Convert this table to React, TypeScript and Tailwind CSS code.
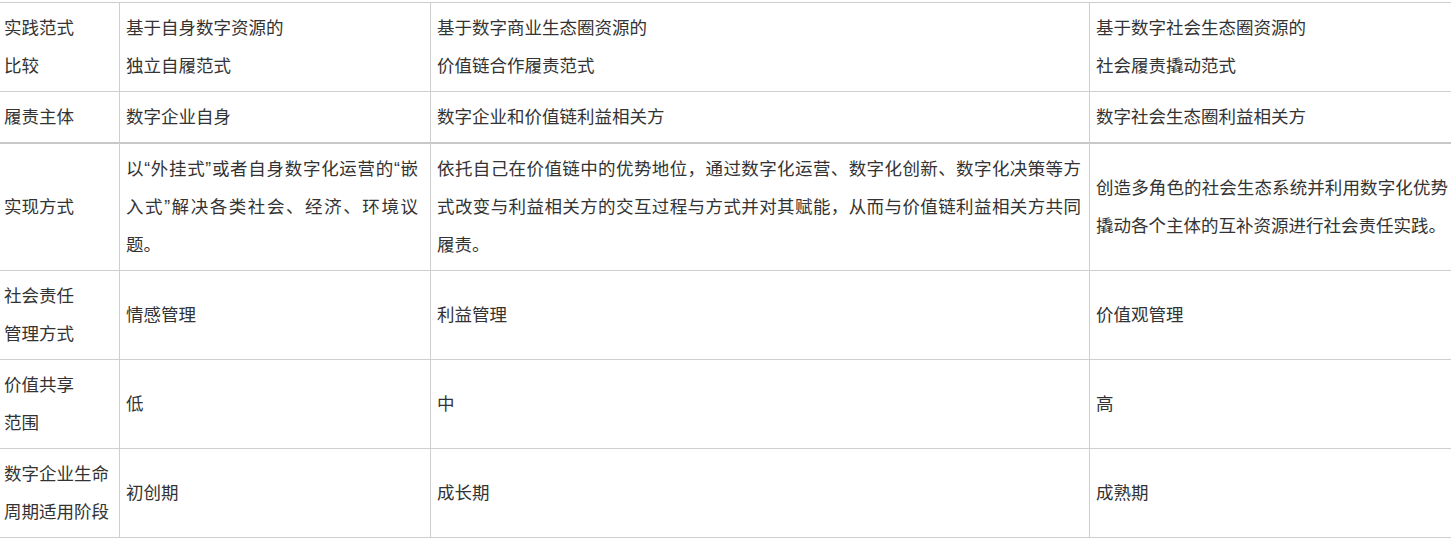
import React from "react";

type Cell = React.ReactNode;

const rows: { cells: Cell[]; thick?: boolean }[] = [
  {
    cells: [
      <>实践范式<br />比较</>,
      <>基于自身数字资源的<br />独立自履范式</>,
      <>基于数字商业生态圈资源的<br />价值链合作履责范式</>,
      <>基于数字社会生态圈资源的<br />社会履责撬动范式</>,
    ],
  },
  {
    cells: ["履责主体", "数字企业自身", "数字企业和价值链利益相关方", "数字社会生态圈利益相关方"],
    thick: true,
  },
  {
    cells: [
      "实现方式",
      "以“外挂式”或者自身数字化运营的“嵌入式”解决各类社会、经济、环境议题。",
      "依托自己在价值链中的优势地位，通过数字化运营、数字化创新、数字化决策等方式改变与利益相关方的交互过程与方式并对其赋能，从而与价值链利益相关方共同履责。",
      "创造多角色的社会生态系统并利用数字化优势撬动各个主体的互补资源进行社会责任实践。",
    ],
  },
  {
    cells: [<>社会责任<br />管理方式</>, "情感管理", "利益管理", "价值观管理"],
  },
  {
    cells: [<>价值共享<br />范围</>, "低", "中", "高"],
  },
  {
    cells: [<>数字企业生命<br />周期适用阶段</>, "初创期", "成长期", "成熟期"],
  },
];

const colPad = [
  "pl-[7px] pr-[4px]",
  "pl-[6px] pr-[12px]",
  "pl-[6px] pr-[8px]",
  "pl-[6px] pr-[6px]",
];

export default function App() {
  return (
    <div className="w-full h-[540px] overflow-hidden bg-white">
      <div
        className="ml-[-3px] mt-[2px] grid grid-cols-[123px_311px_659px_365px] w-[1458px] border-t border-[#cfcfcf] text-[#333333] text-[17.5px] leading-[38px]"
        style={{ fontFamily: '"Liberation Sans", "Noto Sans CJK SC", sans-serif' }}
      >
        {rows.map((row, ri) =>
          row.cells.map((c, ci) => (
            <div
              key={`${ri}-${ci}`}
              className={`flex items-center py-[6px] border-r border-[#cfcfcf] ${
                row.thick ? "border-b-2 border-b-[#c8c8c8]" : "border-b border-b-[#cfcfcf]"
              } ${colPad[ci]}`}
            >
              <div className="w-full text-justify">{c}</div>
            </div>
          ))
        )}
      </div>
    </div>
  );
}
